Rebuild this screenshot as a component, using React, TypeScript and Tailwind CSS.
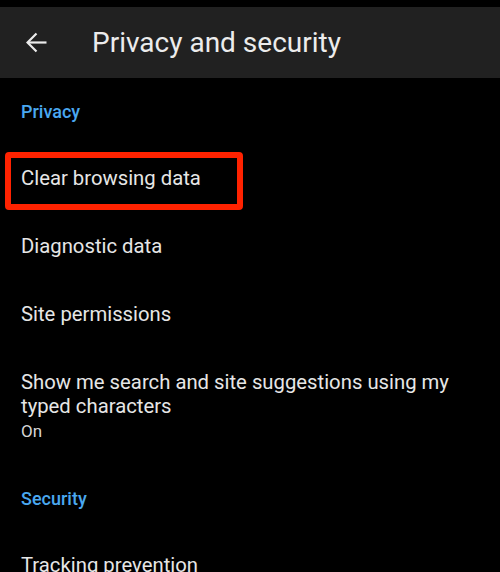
function Row({ label, boxed }: { label: string; boxed?: boolean }) {
  return (
    <div className="relative flex h-[68px] items-center px-[21px] text-[20.3px] text-[#e6e6e6]">
      {boxed && (
        <span
          aria-hidden="true"
          className="pointer-events-none absolute left-[5px] top-[8px] h-[58px] w-[238px] rounded-[4px] border-[6px] border-[#ff2200]"
        />
      )}
      <span className="relative">{label}</span>
    </div>
  );
}

function SectionLabel({ label }: { label: string }) {
  return (
    <div className="flex h-[66px] items-center px-[21px] text-[18px] font-medium text-[#4aa8f0]">
      {label}
    </div>
  );
}

export default function App() {
  return (
    <div
      className="h-[572px] w-[500px] overflow-hidden bg-black"
      style={{ fontFamily: 'Roboto, "Noto Sans", sans-serif' }}
    >
      <div className="h-[7px] bg-black" />
      <header className="flex h-[71px] items-center bg-[#212121] text-[#ececec]">
        <div className="flex w-[92px] items-center pl-[26px]">
          <svg width="21" height="21" viewBox="0 0 21 21" fill="none" stroke="currentColor" strokeWidth="2.2" aria-hidden="true">
            <path d="M10.5 1.5 1.5 10.5l9 9" strokeLinejoin="miter" />
            <path d="M1.8 10.5H20.5" />
          </svg>
        </div>
        <h1 className="text-[28px] font-normal leading-none">Privacy and security</h1>
      </header>

      <SectionLabel label="Privacy" />
      <Row label="Clear browsing data" boxed />
      <Row label="Diagnostic data" />
      <Row label="Site permissions" />
      <div className="flex flex-col px-[21px] pt-[22px] pb-[22px] text-[20.3px] leading-[24px] text-[#e6e6e6]">
        <span className="max-w-[440px]">Show me search and site suggestions using my typed characters</span>
        <span className="mt-[1px] text-[17px] text-[#d6d6d6]">On</span>
      </div>
      <SectionLabel label="Security" />
      <Row label="Tracking prevention" />
    </div>
  );
}
